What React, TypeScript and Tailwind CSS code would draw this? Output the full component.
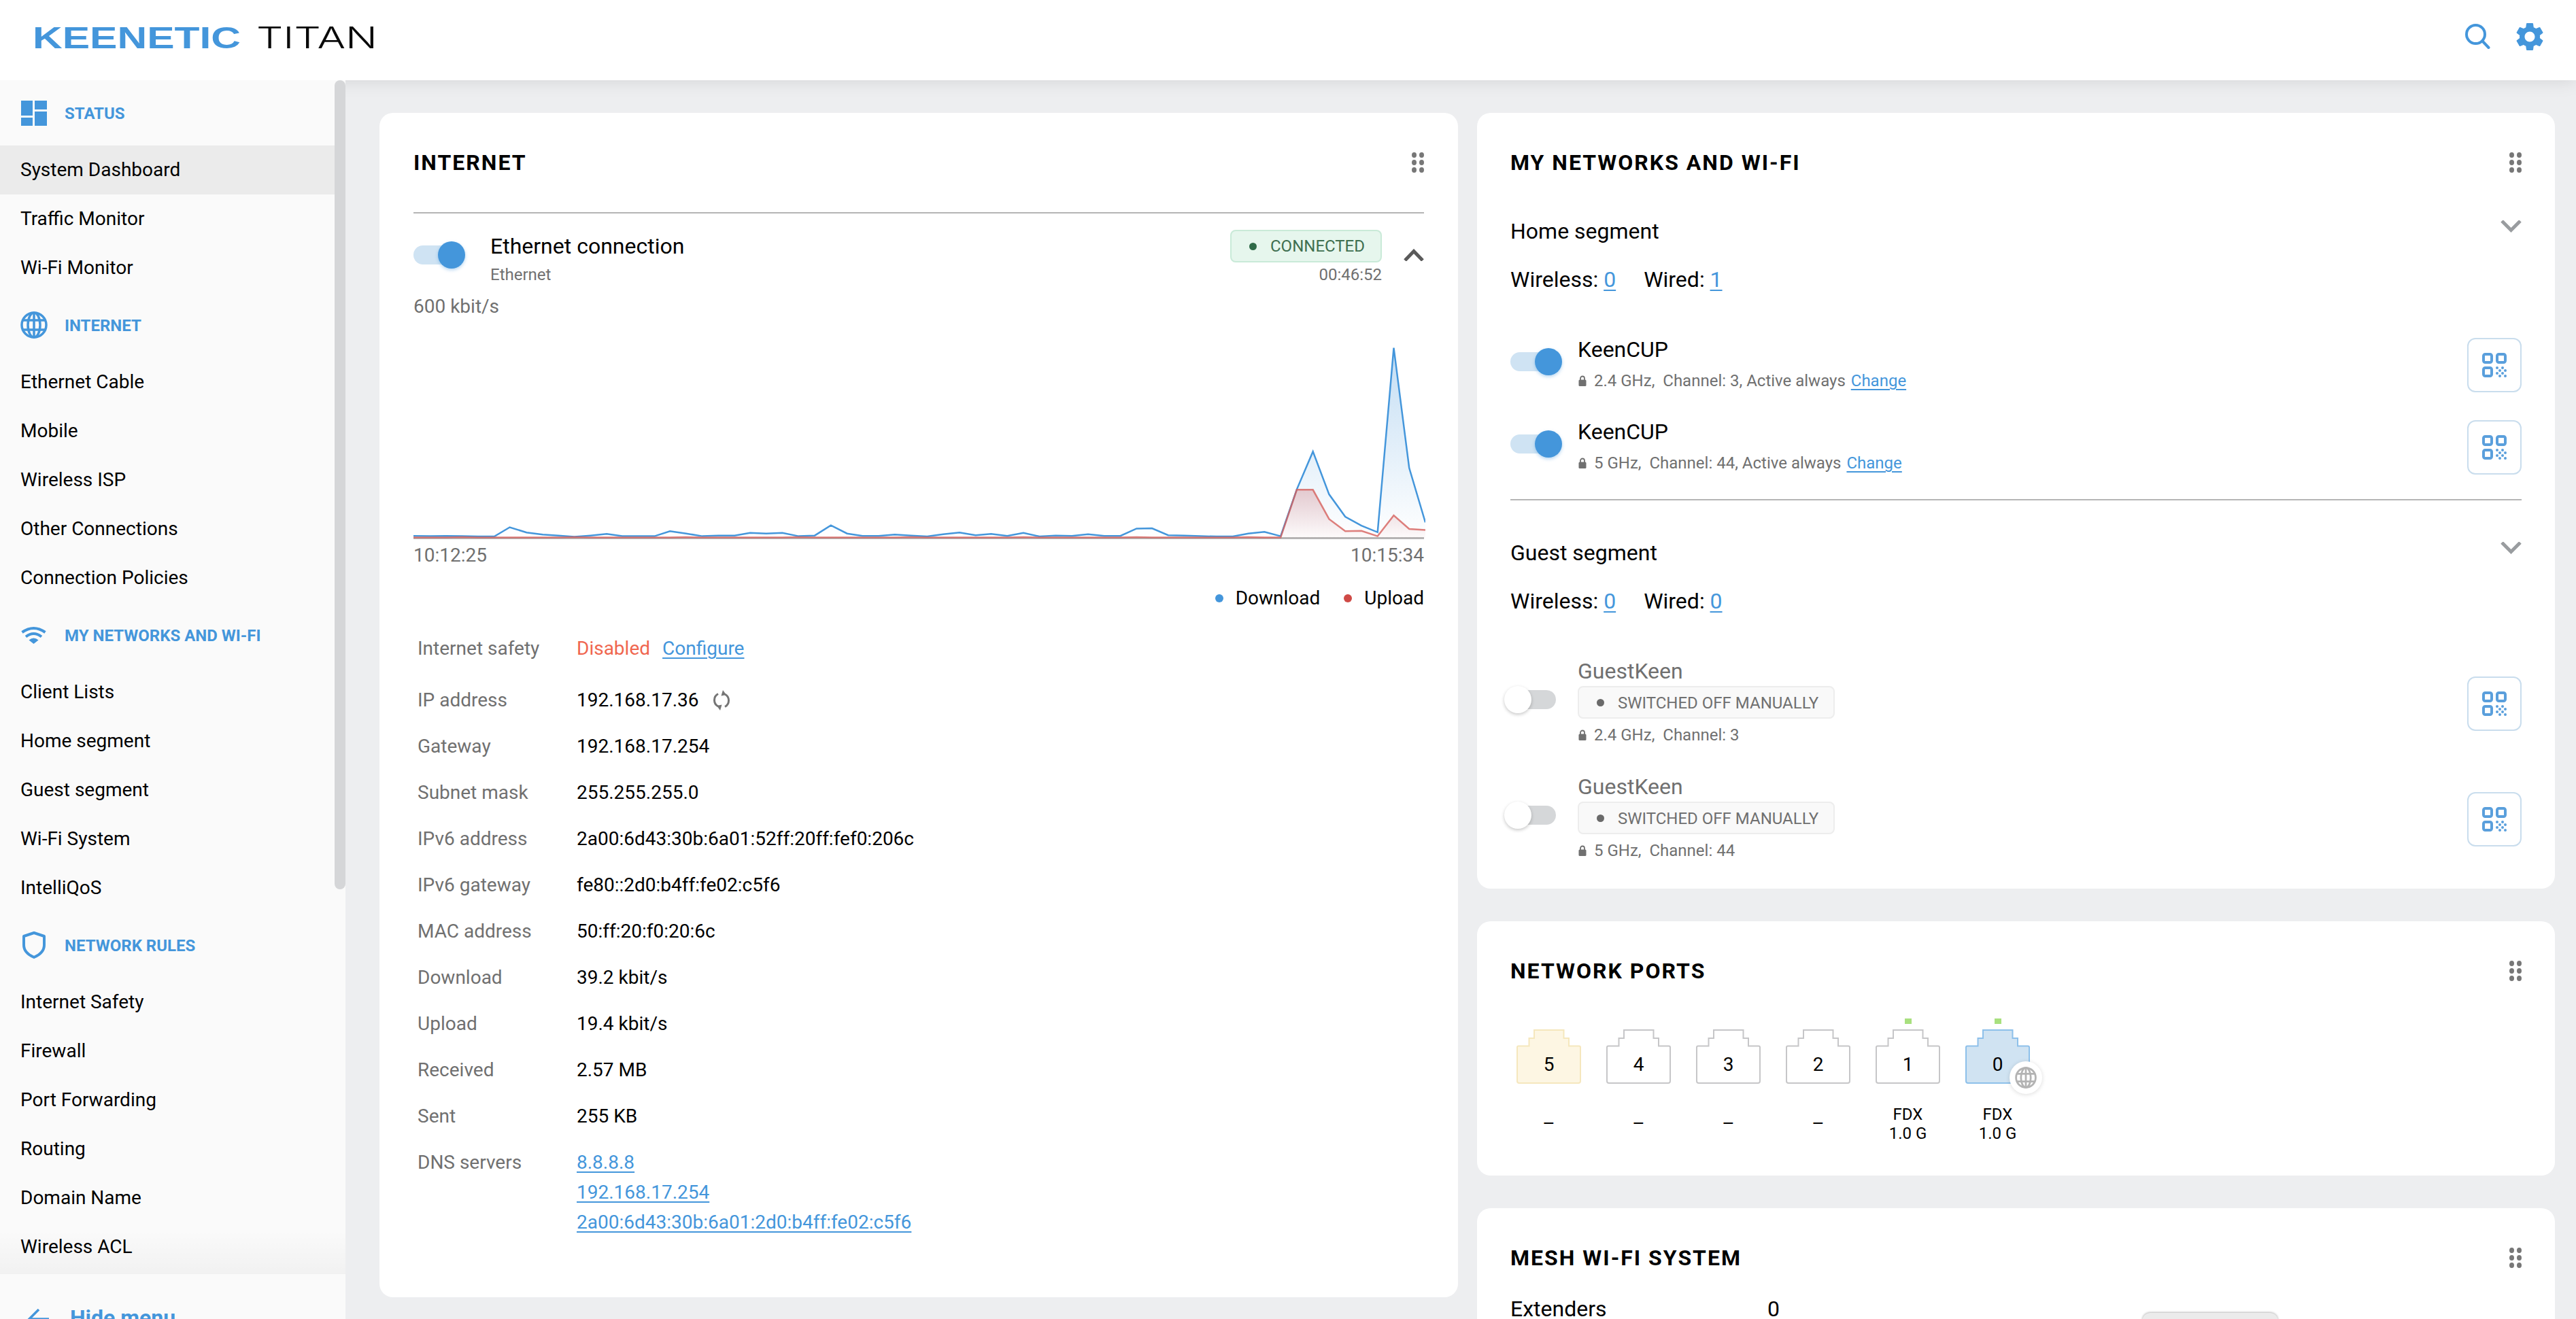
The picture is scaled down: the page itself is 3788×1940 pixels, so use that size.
import React from "react";

const BLUE = "#4496db";

const blueX = [66,90,112,135,158,181,203,227,250,272,295,318,341,363,386,409,431,454,477,500,523,545,568,591,614,637,660,683,705,728,751,774,797,820,843,866,888,911,934,957,980,1003,1026,1049,1072,1095,1117,1140,1163,1186,1209,1232,1254,1277,1300,1323,1346,1369,1392,1415,1438,1461,1483,1506];
const blueY = [1296,1297,1296,1297,1298,1298,1270,1286,1292,1295,1299,1295,1290,1297,1297,1297,1282,1289,1297,1295,1295,1287,1289,1287,1297,1295,1264,1289,1296,1296,1292,1295,1298,1291,1286,1294,1290,1296,1287,1298,1295,1296,1291,1296,1296,1274,1273,1294,1295,1297,1298,1298,1289,1284,1297,1155,1040,1170,1238,1265,1285,725,1090,1255];
const redY = blueX.map((_, i) => (i < 55 ? (i % 7 === 3 ? 1300 : 1301) : 0));
const redTail = [1156, 1156, 1245, 1282, 1281, 1297, 1234, 1275, 1278];
redTail.forEach((v, i) => { redY[55 + i] = v; });
const toPts = (ys: number[]) => blueX.map((x, i) => `${x},${ys[i]}`).join(" ");
const toArea = (ys: number[]) => `66,1304 ${toPts(ys)} 1506,1304`;

function Chart() {
  return (
    <svg width="1488" height="324" viewBox="66 635 1440 669" preserveAspectRatio="none" className="block">
      <defs>
        <linearGradient id="gb" x1="0" y1="0" x2="0" y2="1">
          <stop offset="0" stopColor={BLUE} stopOpacity="0.32" />
          <stop offset="1" stopColor={BLUE} stopOpacity="0" />
        </linearGradient>
        <linearGradient id="gr" x1="0" y1="0" x2="0" y2="1">
          <stop offset="0" stopColor="#c04a4f" stopOpacity="0.26" />
          <stop offset="1" stopColor="#c04a4f" stopOpacity="0.02" />
        </linearGradient>
      </defs>
      <polygon points={toArea(blueY)} fill="url(#gb)" />
      <polyline points={toPts(blueY)} fill="none" stroke={BLUE} strokeWidth="2.5" vectorEffect="non-scaling-stroke" />
      <polygon points={toArea(redY)} fill="url(#gr)" />
      <polyline points={toPts(redY)} fill="none" stroke="#d6605c" strokeOpacity="0.8" strokeWidth="2.5" vectorEffect="non-scaling-stroke" />
    </svg>
  );
}

function Logo() {
  return (
    <svg width="510" height="60" viewBox="0 0 510 60" className="block">
      <text x="0" y="46" fill={BLUE} fontFamily="'Liberation Sans', sans-serif" fontWeight="700" fontSize="45" textLength="306" lengthAdjust="spacingAndGlyphs">KEENETIC</text>
      <text x="329" y="46" fill="#0a0a0a" fontFamily="Inter, sans-serif" fontWeight="300" fontSize="44" textLength="178" lengthAdjust="spacingAndGlyphs">TITAN</text>
    </svg>
  );
}

function SearchIcon() {
  return (
    <svg width="37" height="37" viewBox="0 0 37 37" fill="none" stroke={BLUE} strokeWidth="4" strokeLinecap="round">
      <circle cx="15.5" cy="15.5" r="13.5" />
      <path d="M25.5 25.5 L34.5 35" />
    </svg>
  );
}

function GearIcon() {
  return (
    <svg width="40" height="40" viewBox="2.4 2.4 19.2 19.2" fill={BLUE}>
      <path d="M19.14,12.94c0.04-0.3,0.06-0.61,0.06-0.94c0-0.32-0.02-0.64-0.07-0.94l2.03-1.58c0.18-0.14,0.23-0.41,0.12-0.61 l-1.92-3.32c-0.12-0.22-0.37-0.29-0.59-0.22l-2.39,0.96c-0.5-0.38-1.03-0.7-1.62-0.94L14.4,2.81c-0.04-0.24-0.24-0.41-0.48-0.41 h-3.84c-0.24,0-0.43,0.17-0.47,0.41L9.25,5.35C8.66,5.59,8.12,5.92,7.63,6.29L5.24,5.33c-0.22-0.08-0.47,0-0.59,0.22L2.74,8.87 C2.62,9.08,2.66,9.34,2.86,9.48l2.03,1.58C4.84,11.36,4.8,11.69,4.8,12s0.02,0.64,0.07,0.94l-2.03,1.58 c-0.18,0.14-0.23,0.41-0.12,0.61l1.92,3.32c0.12,0.22,0.37,0.29,0.59,0.22l2.39-0.96c0.5,0.38,1.03,0.7,1.62,0.94l0.36,2.54 c0.05,0.24,0.24,0.41,0.48,0.41h3.84c0.24,0,0.44-0.17,0.47-0.41l0.36-2.54c0.59-0.24,1.13-0.56,1.62-0.94l2.39,0.96 c0.22,0.08,0.47,0,0.59-0.22l1.92-3.32c0.12-0.22,0.07-0.47-0.12-0.61L19.14,12.94z M12,15.6c-1.98,0-3.6-1.62-3.6-3.6 s1.62-3.6,3.6-3.6s3.6,1.62,3.6,3.6S13.98,15.6,12,15.6z" />
    </svg>
  );
}

function DashIcon() {
  return (
    <svg width="38" height="37" viewBox="0 0 38 37" fill={BLUE} className="ml-[1px]">
      <rect x="0" y="0" width="17" height="22" />
      <rect x="0" y="25" width="17" height="12" />
      <rect x="20" y="0" width="18" height="13" />
      <rect x="20" y="16" width="18" height="21" />
    </svg>
  );
}

function GlobeIcon({ size, color, sw }: { size: number; color: string; sw: number }) {
  return (
    <svg width={size} height={size} viewBox="0 0 40 40" fill="none" stroke={color} strokeWidth={sw}>
      <circle cx="20" cy="20" r="18" />
      <ellipse cx="20" cy="20" rx="9" ry="18" />
      <path d="M20 2 V38 M4 13 H36 M4 27 H36" />
    </svg>
  );
}

function WifiIcon() {
  return (
    <svg width="37" height="26" viewBox="0 0 37 26" fill="none" stroke={BLUE} strokeWidth="4" className="ml-[1px]">
      <path d="M1.5 9 Q18.5 -3 35.500 9" />
      <path d="M7 15.500 Q18.5 6.500 30 15.500" />
      <path d="M11.500 20.500 Q18.5 14.500 25.500 20.500 L18.5 26 Z" fill={BLUE} stroke="none" />
    </svg>
  );
}

function ShieldIcon() {
  return (
    <svg width="34" height="40" viewBox="0 0 34 40" fill="none" stroke={BLUE} strokeWidth="4" strokeLinejoin="round" className="ml-[3px]">
      <path d="M17 2 L32 7 V20 C32 29 25 34.500 17 38 C9 34.500 2 29 2 20 V7 Z" />
    </svg>
  );
}

function DragDots() {
  return (
    <svg width="18" height="30" viewBox="0 0 18 30" fill="#777777" className="shrink-0">
      <ellipse cx="3.500" cy="4" rx="3.500" ry="4" />
      <ellipse cx="14.500" cy="4" rx="3.500" ry="4" />
      <ellipse cx="3.500" cy="15" rx="3.500" ry="4" />
      <ellipse cx="14.500" cy="15" rx="3.500" ry="4" />
      <ellipse cx="3.500" cy="26" rx="3.500" ry="4" />
      <ellipse cx="14.500" cy="26" rx="3.500" ry="4" />
    </svg>
  );
}

function QrIcon() {
  const dots: [number, number][] = [[22, 22], [30, 22], [26, 26], [34, 26], [22, 30], [30, 30], [26, 34], [34, 34]];
  return (
    <svg width="36" height="36" viewBox="0 0 36 36" fill="none" stroke="#5a9fdc" strokeWidth="4">
      <rect x="2" y="2" width="12" height="12" rx="2.500" />
      <rect x="22" y="2" width="12" height="12" rx="2.500" />
      <rect x="2" y="22" width="12" height="12" rx="2.500" />
      {dots.map(([x, y]) => (
        <circle key={`${x}-${y}`} cx={x} cy={y} r="2" fill="#5a9fdc" stroke="none" />
      ))}
    </svg>
  );
}

function QrButton() {
  return (
    <div className="w-[80px] h-[80px] shrink-0 rounded-[12px] border-2 border-[#c9dded] flex items-center justify-center">
      <QrIcon />
    </div>
  );
}

function LockIcon() {
  return (
    <svg width="12" height="16" viewBox="0 0 12 16" fill="#707070" className="ml-[1px] mr-[11px] shrink-0">
      <path d="M3 7 V4.500 a3 3 0 0 1 6 0 V7" fill="none" stroke="#707070" strokeWidth="1.800" />
      <rect x="0.500" y="6.500" width="11" height="9.500" rx="1.500" />
    </svg>
  );
}

function ToggleOn() {
  return (
    <div className="flex items-center h-[40px]">
      <div className="w-[72px] h-[28px] rounded-full bg-[#cfe3f3] shrink-0" />
      <div className="w-[40px] h-[40px] rounded-full bg-[#4496db] -ml-[36px] shrink-0 relative shadow-[0_2px_5px_rgba(68,150,219,0.4)]" />
    </div>
  );
}

function ToggleOff() {
  return (
    <div className="flex items-center h-[40px]">
      <div className="w-[40px] h-[40px] rounded-full bg-white shrink-0 relative z-10 shadow-[0_2px_5px_rgba(0,0,0,0.22)]" />
      <div className="w-[72px] h-[28px] rounded-full bg-[#d5d7d9] -ml-[36px] shrink-0" />
    </div>
  );
}

function ChevUp() {
  return (
    <svg width="30" height="18" viewBox="0 0 30 18" fill="none" stroke="#5a5a5a" strokeWidth="5">
      <path d="M2 17 L15 3.500 L28 17" />
    </svg>
  );
}

function ChevDown() {
  return (
    <svg width="31" height="18" viewBox="0 0 31 18" fill="none" stroke="#999c9f" strokeWidth="5">
      <path d="M2 1 L15.500 14.500 L29 1" />
    </svg>
  );
}

function RefreshIcon() {
  return (
    <svg width="28" height="30" viewBox="0 0 28 30" fill="none" stroke="#757575" strokeWidth="3" className="ml-[19px]">
      <path d="M9 5.500 A10.500 10.500 0 0 0 9 24" />
      <path d="M19 6 A10.500 10.500 0 0 1 19 24.500" />
      <path d="M16 0 L21 7 L13.500 8.500 Z" fill="#757575" stroke="none" />
      <path d="M12 30 L7 23 L14.500 21.500 Z" fill="#757575" stroke="none" />
    </svg>
  );
}

function Port({ n, kind, link, label, wan }: { n: string; kind: "idle" | "yellow" | "blue"; link?: boolean; label?: boolean; wan?: boolean }) {
  const fill = kind === "yellow" ? "#fdf6e3" : kind === "blue" ? "#d0e3f2" : "#ffffff";
  const stroke = kind === "yellow" ? "#f5e7bd" : kind === "blue" ? "#8dc0ea" : "#c6c6c8";
  return (
    <div className="w-[132px] shrink-0">
      <div className="w-[95px] h-[8px] flex justify-center">
        {link && <div className="w-[10px] h-[8px] bg-[#a8e07e]" />}
      </div>
      <div className="relative w-[95px] h-[80px] mt-[8px]">
        <svg width="95" height="80" viewBox="0 0 95 80" className="block">
          <path d="M3 24.500 H18.500 V13 H26 V1 H69.500 V13 H77 V24.500 H92 Q94 24.500 94 26.500 V76 Q94 79 91 79 H4 Q1 79 1 76 V26.500 Q1 24.500 3 24.500 Z" fill={fill} stroke={stroke} strokeWidth="2" />
        </svg>
        <div className="absolute left-0 right-0 top-[32px] h-[40px] flex items-center justify-center text-[28px] text-black">{n}</div>
        {wan && (
          <div className="absolute left-[65px] top-[47px] w-[48px] h-[48px] rounded-full bg-white shadow-[0_1px_6px_rgba(0,0,0,0.14)] flex items-center justify-center">
            <GlobeIcon size={32} color="#b3b3b3" sw={3.5} />
          </div>
        )}
      </div>
      <div className="w-[95px] mt-[31px] h-[56px] flex flex-col items-center justify-center text-[24px] leading-[28px] text-black">
        {label ? (
          <>
            <div>FDX</div>
            <div>1.0 G</div>
          </>
        ) : (
          <div className="text-[28px]">–</div>
        )}
      </div>
    </div>
  );
}

function Section({ icon, label }: { icon: React.ReactNode; label: string }) {
  return (
    <div className="h-[96px] flex items-center pl-[30px]">
      <div className="w-[65px] shrink-0 flex items-center">{icon}</div>
      <div className="mt-[2px] text-[24px] leading-[32px] font-bold text-[#4496db] whitespace-nowrap">{label}</div>
    </div>
  );
}

function Item({ label, active }: { label: string; active?: boolean }) {
  return active ? (
    <div className="h-[72px] flex items-center pl-[30px] text-[28px] text-black bg-[#ebebeb]">{label}</div>
  ) : (
    <div className="h-[72px] flex items-center pl-[30px] text-[28px] text-black">{label}</div>
  );
}

function Sidebar() {
  return (
    <div className="w-[508px] shrink-0 bg-[#fafafa] flex flex-col relative z-20">
      <div className="h-[1756px] shrink-0 relative overflow-hidden">
        <div className="w-[492px]">
          <Section icon={<DashIcon />} label="STATUS" />
          <Item label="System Dashboard" active />
          <Item label="Traffic Monitor" />
          <Item label="Wi-Fi Monitor" />
          <Section icon={<GlobeIcon size={40} color={BLUE} sw={3.500} />} label="INTERNET" />
          <Item label="Ethernet Cable" />
          <Item label="Mobile" />
          <Item label="Wireless ISP" />
          <Item label="Other Connections" />
          <Item label="Connection Policies" />
          <Section icon={<WifiIcon />} label="MY NETWORKS AND WI-FI" />
          <Item label="Client Lists" />
          <Item label="Home segment" />
          <Item label="Guest segment" />
          <Item label="Wi-Fi System" />
          <Item label="IntelliQoS" />
          <Section icon={<ShieldIcon />} label="NETWORK RULES" />
          <Item label="Internet Safety" />
          <Item label="Firewall" />
          <Item label="Port Forwarding" />
          <Item label="Routing" />
          <Item label="Domain Name" />
          <Item label="Wireless ACL" />
        </div>
        <div className="absolute top-0 right-0 w-[16px] h-[1190px] rounded-full bg-[#d5d6d8]" />
        <div className="absolute bottom-0 left-0 right-0 h-[64px] bg-gradient-to-b from-[#00000000] to-[#00000009]" />
      </div>
      <div className="flex items-start pt-[42px] pl-[40px]">
        <svg width="32" height="30" viewBox="0 0 32 30" fill="none" stroke={BLUE} strokeWidth="3.500" className="mt-[9px] shrink-0">
          <path d="M32 15 H3 M17 1 L3 15 L17 29" />
        </svg>
        <div className="ml-[31px] text-[32px] leading-[44px] font-bold text-[#4496db]">Hide menu</div>
      </div>
    </div>
  );
}

function CardTitle({ title }: { title: string }) {
  return (
    <div className="h-[146px] flex items-center justify-between">
      <div className="text-[32px] leading-[40px] font-bold tracking-[2px] text-black">{title}</div>
      <DragDots />
    </div>
  );
}

function Info({ label, children, className }: { label: string; children: React.ReactNode; className?: string }) {
  return (
    <div className={`h-[68px] flex items-center ${className ?? ""}`}>
      <div className="w-[234px] shrink-0 text-[#707070]">{label}</div>
      <div className="flex items-center text-black">{children}</div>
    </div>
  );
}

function LinkText({ children }: { children: React.ReactNode }) {
  return <span className="text-[#4496db] underline underline-offset-[4px] decoration-[2px]">{children}</span>;
}

function InternetCard() {
  return (
    <div className="w-[1586px] shrink-0 bg-white rounded-[20px] px-[50px] pb-[88px]">
      <div className="h-[148px] flex items-center justify-between border-b-2 border-[#b5b5b5]">
        <div className="text-[32px] leading-[40px] font-bold tracking-[2px] text-black">INTERNET</div>
        <DragDots />
      </div>
      <div className="flex pt-[24px]">
        <div className="w-[113px] shrink-0 pt-[17px]">
          <ToggleOn />
        </div>
        <div className="flex-1">
          <div className="text-[32px] leading-[48px] text-black">Ethernet connection</div>
          <div className="text-[24px] leading-[36px] text-[#707070]">Ethernet</div>
        </div>
        <div className="flex flex-col items-end">
          <div className="h-[48px] w-[223px] rounded-[8px] border-2 border-[#c9ead8] bg-[#e6f6ed] flex items-center pl-[26px] text-[24px] text-[#3f6f50] whitespace-nowrap">
            <span className="w-[11px] h-[11px] rounded-full bg-[#2f6b48] mr-[20px] shrink-0" />
            CONNECTED
          </div>
          <div className="text-[24px] leading-[36px] text-[#707070]">00:46:52</div>
        </div>
        <div className="ml-[32px] pt-[28px] shrink-0">
          <ChevUp />
        </div>
      </div>
      <div className="mt-[12px] text-[28px] leading-[34px] text-[#707070]">600 kbit/s</div>
      <Chart />
      <div className="h-[3px] -mt-[2px] bg-[#b5b5b5]" />
      <div className="mt-[6px] flex justify-between text-[28px] leading-[36px] text-[#707070]">
        <div>10:12:25</div>
        <div>10:15:34</div>
      </div>
      <div className="mt-[27px] flex justify-end items-center text-[28px] leading-[36px] text-black">
        <span className="w-[12px] h-[12px] rounded-full bg-[#4496db] mr-[18px]" />
        <span>Download</span>
        <span className="w-[12px] h-[12px] rounded-full bg-[#cf4a46] ml-[35px] mr-[18px]" />
        <span>Upload</span>
      </div>
      <div className="mt-[22px] ml-[6px] text-[28px] leading-[36px]">
        <Info label="Internet safety" className="mb-[8px]">
          <span className="text-[#f0664f]">Disabled</span>
          <span className="ml-[18px]"><LinkText>Configure</LinkText></span>
        </Info>
        <Info label="IP address">
          <span>192.168.17.36</span>
          <RefreshIcon />
        </Info>
        <Info label="Gateway">192.168.17.254</Info>
        <Info label="Subnet mask">255.255.255.0</Info>
        <Info label="IPv6 address">2a00:6d43:30b:6a01:52ff:20ff:fef0:206c</Info>
        <Info label="IPv6 gateway">fe80::2d0:b4ff:fe02:c5f6</Info>
        <Info label="MAC address">50:ff:20:f0:20:6c</Info>
        <Info label="Download">39.2 kbit/s</Info>
        <Info label="Upload">19.4 kbit/s</Info>
        <Info label="Received">2.57 MB</Info>
        <Info label="Sent">255 KB</Info>
        <div className="flex mt-[12px] leading-[44px]">
          <div className="w-[234px] shrink-0 text-[#707070]">DNS servers</div>
          <div className="flex flex-col items-start">
            <LinkText>8.8.8.8</LinkText>
            <LinkText>192.168.17.254</LinkText>
            <LinkText>2a00:6d43:30b:6a01:2d0:b4ff:fe02:c5f6</LinkText>
          </div>
        </div>
      </div>
    </div>
  );
}

function Counts({ wireless, wired }: { wireless: string; wired: string }) {
  return (
    <div className="mt-[27px] flex text-[32px] leading-[44px] text-black whitespace-pre">
      <span>Wireless: <LinkText>{wireless}</LinkText></span>
      <span className="ml-[41px]">Wired: <LinkText>{wired}</LinkText></span>
    </div>
  );
}

function SegmentHead({ title }: { title: string }) {
  return (
    <div className="flex justify-between items-start text-[32px] leading-[44px] text-black">
      <div>{title}</div>
      <div className="pt-[6px]">
        <ChevDown />
      </div>
    </div>
  );
}

function OnRow({ band }: { band: string }) {
  return (
    <div className="h-[80px] flex">
      <div className="w-[99px] shrink-0 pt-[15px]">
        <ToggleOn />
      </div>
      <div className="flex-1 -mt-[5px]">
        <div className="text-[32px] leading-[44px] text-black">KeenCUP</div>
        <div className="mt-[6px] flex items-center text-[24px] leading-[36px] text-[#707070] whitespace-pre">
          <LockIcon />
          <span>{band}</span>
          <span className="ml-[8px]"><LinkText>Change</LinkText></span>
        </div>
      </div>
      <QrButton />
    </div>
  );
}

function OffRow({ band }: { band: string }) {
  return (
    <div className="h-[80px] flex">
      <div className="w-[108px] shrink-0 -ml-[9px] pt-[14px]">
        <ToggleOff />
      </div>
      <div className="flex-1 -mt-[30px]">
        <div className="text-[32px] leading-[44px] text-[#707070]">GuestKeen</div>
        <div className="h-[48px] w-[378px] rounded-[8px] border-2 border-[#ededed] bg-[#f9f9f9] flex items-center pl-[26px] pt-[1px] text-[24px] text-[#707070] whitespace-nowrap">
          <span className="w-[11px] h-[11px] rounded-full bg-[#6a6a6a] mr-[20px] shrink-0" />
          SWITCHED OFF MANUALLY
        </div>
        <div className="h-[48px] flex items-center text-[24px] text-[#707070] whitespace-pre">
          <LockIcon />
          <span>{band}</span>
        </div>
      </div>
      <QrButton />
    </div>
  );
}

function NetworksCard() {
  return (
    <div className="bg-white rounded-[20px] px-[49px] pb-[62px]">
      <CardTitle title="MY NETWORKS AND WI-FI" />
      <div className="mt-[6px]">
        <SegmentHead title="Home segment" />
      </div>
      <Counts wireless="0" wired="1" />
      <div className="mt-[64px] flex flex-col gap-[41px]">
        <OnRow band="2.4 GHz,  Channel: 3, Active always" />
        <OnRow band="5 GHz,  Channel: 44, Active always" />
      </div>
      <div className="mt-[36px] border-t-2 border-[#b5b5b5]" />
      <div className="mt-[55px]">
        <SegmentHead title="Guest segment" />
      </div>
      <Counts wireless="0" wired="0" />
      <div className="mt-[89px] flex flex-col gap-[90px]">
        <OffRow band="2.4 GHz,  Channel: 3" />
        <OffRow band="5 GHz,  Channel: 44" />
      </div>
    </div>
  );
}

function PortsCard() {
  return (
    <div className="bg-white rounded-[20px] px-[49px] h-[374px]">
      <CardTitle title="NETWORK PORTS" />
      <div className="flex pl-[9px] -mt-[3px]">
        <Port n="5" kind="yellow" />
        <Port n="4" kind="idle" />
        <Port n="3" kind="idle" />
        <Port n="2" kind="idle" />
        <Port n="1" kind="idle" link label />
        <Port n="0" kind="blue" link label wan />
      </div>
    </div>
  );
}

function MeshCard() {
  return (
    <div className="bg-white rounded-[20px] px-[49px] h-[400px]">
      <CardTitle title="MESH WI-FI SYSTEM" />
      <div className="flex items-start -mt-[20px] text-[32px] leading-[44px] text-black">
        <div className="w-[378px] shrink-0">Extenders</div>
        <div className="w-[551px] shrink-0">0</div>
        <div className="w-[200px] h-[60px] mt-[28px] rounded-[12px] bg-[#ebebeb] shadow-[0_-1px_3px_rgba(0,0,0,0.28)]" />
      </div>
    </div>
  );
}

export default function App() {
  return (
    <div className="w-[3788px] h-[1940px] overflow-hidden flex flex-col bg-[#edeef0] font-['Roboto',sans-serif]">
      <header className="h-[118px] shrink-0 bg-white flex items-center justify-between pl-[48px] pr-[48px] relative z-10 shadow-[0_2px_24px_rgba(0,0,0,0.1)]">
        <div className="mb-[8px]">
          <Logo />
        </div>
        <div className="flex items-center gap-[38px] mb-[11px]">
          <SearchIcon />
          <GearIcon />
        </div>
      </header>
      <div className="flex flex-1 min-h-0">
        <Sidebar />
        <main className="flex-1 min-w-0 flex gap-[28px] pl-[50px] pr-[31px] pt-[48px] overflow-hidden items-start">
          <InternetCard />
          <div className="flex-1 min-w-0 flex flex-col gap-[48px]">
            <NetworksCard />
            <PortsCard />
            <MeshCard />
          </div>
        </main>
      </div>
    </div>
  );
}
